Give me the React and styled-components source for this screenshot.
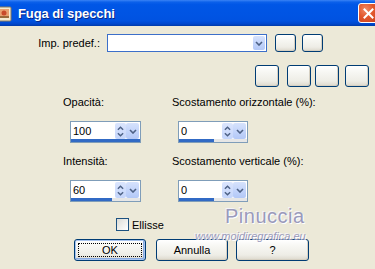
import React from "react";
import styled, { createGlobalStyle } from "styled-components";

const Global = createGlobalStyle`
  html, body { margin: 0; padding: 0; }
  body {
    width: 375px; height: 269px; overflow: hidden;
    background: #ECE9D8;
    font-family: "Liberation Sans", Arial, sans-serif;
    font-size: 11px; color: #000;
  }
`;

const Window = styled.div`
  position: relative;
  width: 375px;
  height: 269px;
  overflow: hidden;
  background: #ECE9D8;
  display: flex;
  flex-direction: column;
`;

const TitleBar = styled.div`
  height: 26px;
  flex: none;
  display: flex;
  align-items: center;
  background: linear-gradient(to bottom, #3a83f5 0%, #0b60ea 8%, #0056e6 18%, #0054e3 60%, #0052e0 80%, #0047cc 92%, #003aa8 100%);
`;

const TitleIcon = styled.svg`
  width: 16px;
  height: 16px;
  margin-left: -4px;
  margin-top: 2px;
  flex: none;
`;

const TitleText = styled.div`
  margin-left: 6px;
  color: #fff;
  font-family: "Liberation Sans", Arial, sans-serif;
  font-weight: bold;
  font-size: 13px;
  letter-spacing: -0.1px;
  text-shadow: 1px 1px 0 #0a2a8a;
`;

const CloseButton = styled.div`
  margin-left: auto;
  margin-right: -4px;
  width: 21px;
  height: 20px;
  margin-top: 0px;
  box-sizing: border-box;
  border: 1px solid #fff;
  border-radius: 3px;
  background: radial-gradient(circle at 35% 30%, #f08a66 0%, #e2562c 45%, #c8401b 100%);
  display: flex;
  align-items: center;
  justify-content: center;
  flex: none;
`;

const Body = styled.div`
  flex: 1;
  display: flex;
  flex-direction: column;
`;

const PresetRow = styled.div`
  display: flex;
  align-items: center;
  margin-top: 8px;
  height: 18px;
`;

const PresetLabel = styled.div`
  width: 107px;
  box-sizing: border-box;
  padding-right: 7px;
  text-align: right;
  white-space: nowrap;
`;

const Select = styled.div`
  width: 160px;
  height: 18px;
  box-sizing: border-box;
  border: 1px solid #3c6fc9;
  background: #fff;
  display: flex;
  justify-content: flex-end;
  align-items: stretch;
  padding: 1px;
`;

const DropArrow = styled.div`
  width: ${(p) => p.$w || 12}px;
  border-radius: 2px;
  background: linear-gradient(to bottom, #d6e2fc 0%, #c0d2fa 60%, #b3c8f6 100%);
  display: flex;
  align-items: center;
  justify-content: center;
`;

const XpButton = styled.div`
  box-sizing: border-box;
  width: ${(p) => p.$w}px;
  height: ${(p) => p.$h}px;
  margin-left: ${(p) => p.$ml || 0}px;
  border: 1px solid #003c74;
  border-radius: 3px;
  background: linear-gradient(to bottom, #ffffff 0%, #f7f7f3 30%, #eeede6 75%, #dcd8cc 100%);
  box-shadow: inset -1px -1px 0 #d6d0c2;
  display: flex;
  align-items: center;
  justify-content: center;
  flex: none;
  font-size: 11px;
`;

const ToolRow = styled.div`
  display: flex;
  justify-content: flex-end;
  padding-right: 6px;
  margin-top: 13px;
`;

const FieldGrid = styled.div`
  display: grid;
  grid-template-columns: 109px auto;
  row-gap: 12px;
  padding-left: 63px;
  margin-top: 9px;
`;

const Field = styled.div`
  display: flex;
  flex-direction: column;
  align-items: flex-start;
`;

const FieldLabel = styled.div`
  line-height: 13px;
  white-space: nowrap;
`;

const SpinBox = styled.div`
  margin-top: 12px;
  margin-left: ${(p) => p.$indent}px;
  width: ${(p) => p.$w}px;
  height: 22px;
  box-sizing: border-box;
  border: 1px solid #7f9db9;
  background: #fff;
  display: flex;
  flex-direction: column;
`;

const SpinTop = styled.div`
  flex: 1;
  display: flex;
  align-items: stretch;
  padding: 1px 1px 0 0;
`;

const SpinValue = styled.div`
  flex: 1;
  padding-left: 2px;
  line-height: 16px;
  font-size: 11px;
`;

const UpDown = styled.div`
  width: 11px;
  border-radius: 2px;
  background: linear-gradient(to bottom, #dbe5fd 0%, #c4d5fb 100%);
  display: flex;
  flex-direction: column;
  align-items: center;
  justify-content: center;
  gap: 1px;
`;

const Bar = styled.div`
  height: 3px;
  background: #e6e6e6;
  display: flex;
`;

const BarFill = styled.div`
  height: 100%;
  background: #316ac5;
`;

const CheckRow = styled.div`
  display: flex;
  align-items: center;
  padding-left: 116px;
  margin-top: 16px;
  height: 13px;
`;

const CheckBox = styled.div`
  width: 13px;
  height: 13px;
  box-sizing: border-box;
  border: 1px solid #1c5180;
  background: linear-gradient(135deg, #dcdcd7 0%, #f2f2ef 60%, #ffffff 100%);
`;

const CheckLabel = styled.div`
  margin-left: 3px;
`;

const ButtonRow = styled.div`
  display: flex;
  padding-left: 74px;
  margin-top: 8px;
`;

const FocusRing = styled.div`
  position: absolute;
  inset: 3px;
  border: 1px dotted #000;
`;

const DefaultButton = styled(XpButton)`
  position: relative;
  box-shadow: inset 0 0 0 1px #a8c4ef, inset -1px -1px 0 1px #8aaae0;
`;

const Watermark = styled.div`
  position: absolute;
  left: ${(p) => p.$x}px;
  top: ${(p) => p.$y}px;
  font-size: ${(p) => p.$size}px;
  font-style: ${(p) => (p.$italic ? "italic" : "normal")};
  letter-spacing: ${(p) => p.$ls || 0}px;
  color: #9a9abb;
  text-shadow: 1px 1px 0 #ffffff, -1px -1px 0 #f4f4f8;
  font-family: "Liberation Sans", Arial, sans-serif;
  white-space: nowrap;
  pointer-events: none;
`;

const Chevron = ({ dir = "down", w = 8, h = 5, color = "#4d6185" }) => (
  <svg width={w} height={h} viewBox="0 0 8 5">
    <path
      d={dir === "down" ? "M1 1 L4 4 L7 1" : "M1 4 L4 1 L7 4"}
      fill="none"
      stroke={color}
      strokeWidth="1.6"
    />
  </svg>
);

const Spin = ({ value, pct, w, indent }) => (
  <SpinBox $w={w} $indent={indent}>
    <SpinTop>
      <SpinValue>{value}</SpinValue>
      <UpDown>
        <Chevron dir="up" w={7} h={5} />
        <Chevron dir="down" w={7} h={5} />
      </UpDown>
      <DropArrow $w={13}>
        <Chevron dir="down" />
      </DropArrow>
    </SpinTop>
    <Bar>
      <BarFill style={{ width: `${pct}%` }} />
    </Bar>
  </SpinBox>
);

const fields = [
  { label: "Opacità:", value: "100", pct: 100, w: 71, indent: 7 },
  { label: "Scostamento orizzontale (%):", value: "0", pct: 51, w: 70, indent: 6 },
  { label: "Intensità:", value: "60", pct: 59, w: 71, indent: 7 },
  { label: "Scostamento verticale (%):", value: "0", pct: 51, w: 70, indent: 6 },
];

export default function App() {
  return (
    <>
      <Global />
      <Window>
        <TitleBar>
          <TitleIcon viewBox="0 0 16 16">
            <rect x="1" y="1" width="14" height="14" rx="1" fill="#f4ead0" stroke="#8a7a5a" strokeWidth="1" />
            <rect x="3" y="3" width="10" height="9" fill="#e8a070" />
            <circle cx="8" cy="7" r="2.5" fill="#c84a2a" />
            <rect x="3" y="10" width="10" height="2" fill="#9a6a3a" />
          </TitleIcon>
          <TitleText>Fuga di specchi</TitleText>
          <CloseButton>
            <svg width="11" height="11" viewBox="0 0 11 11">
              <path d="M1.5 1.5 L9.5 9.5 M9.5 1.5 L1.5 9.5" stroke="#fff" strokeWidth="2" strokeLinecap="square" />
            </svg>
          </CloseButton>
        </TitleBar>
        <Body>
          <PresetRow>
            <PresetLabel>Imp. predef.:</PresetLabel>
            <Select>
              <DropArrow>
                <Chevron />
              </DropArrow>
            </Select>
            <XpButton $w={21} $h={18} $ml={8} />
            <XpButton $w={21} $h={18} $ml={6} />
          </PresetRow>
          <ToolRow>
            <XpButton $w={24} $h={22} />
            <XpButton $w={24} $h={22} $ml={8} />
            <XpButton $w={24} $h={22} $ml={4} />
            <XpButton $w={24} $h={22} $ml={6} />
          </ToolRow>
          <FieldGrid>
            {fields.map((f) => (
              <Field key={f.label}>
                <FieldLabel>{f.label}</FieldLabel>
                <Spin value={f.value} pct={f.pct} w={f.w} indent={f.indent} />
              </Field>
            ))}
          </FieldGrid>
          <CheckRow>
            <CheckBox />
            <CheckLabel>Ellisse</CheckLabel>
          </CheckRow>
          <ButtonRow>
            <DefaultButton $w={72} $h={22}>
              <FocusRing />
              OK
            </DefaultButton>
            <XpButton $w={72} $h={22} $ml={10}>Annulla</XpButton>
            <XpButton $w={73} $h={22} $ml={8}>?</XpButton>
          </ButtonRow>
        </Body>
        <Watermark $x={225} $y={205} $size={20} $ls={0.5}>Pinuccia</Watermark>
        <Watermark $x={195} $y={230} $size={11} $italic>www.moidiregrafica.eu</Watermark>
      </Window>
    </>
  );
}
